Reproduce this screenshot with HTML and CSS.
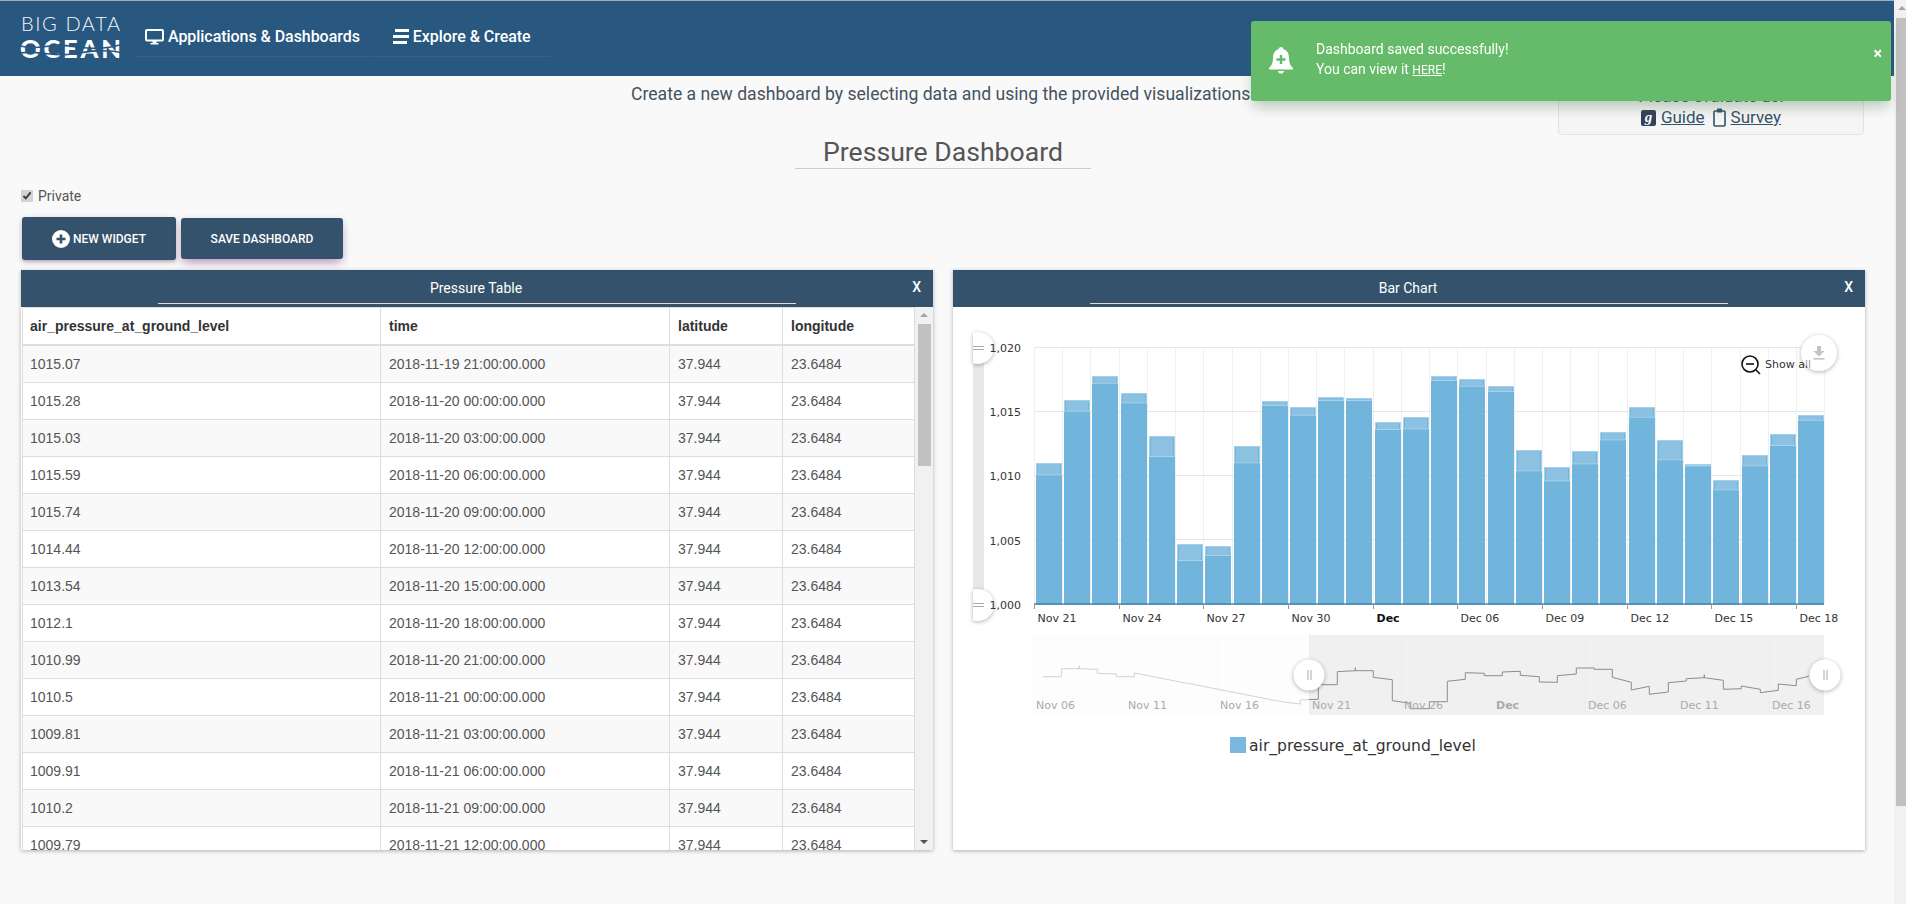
FILE: index.html
```html
<!DOCTYPE html>
<html lang="en">
<head>
    <meta charset="UTF-8">
    <meta name="viewport" content="width=device-width, initial-scale=1.0">
    <title>Pressure Dashboard</title>
    <link rel="stylesheet" href="styles.css">
</head>
<body>

<div class="app">
    <header class="navbar">
        <svg class="logo" width="104" height="54" viewBox="0 0 104 54">
            <text class="logo-top" x="1" y="22">BIG DATA</text>
            <text class="logo-bottom" x="0" y="49">OCEAN</text>
            <path class="logo-wave" d="M0 37c18 5 30 -3 50 0s32 4 54 -2"/>
            <path class="logo-wave" d="M0 44c16 -3 34 4 52 1s34 -5 52 -1"/>
        </svg>
        <nav class="nav-links">
            <a class="nav-link nav-apps" href="#">
                <svg width="19" height="16" viewBox="0 0 19 16">
                    <rect x="1" y="1" width="17" height="10.5" rx="1" fill="none" stroke="#fff" stroke-width="2"/>
                    <path d="M7.5 12h4v2h2v1.5h-8V14h2z" fill="#fff"/>
                </svg>
                Applications &amp; Dashboards
            </a>
            <a class="nav-link nav-explore" href="#">
                <svg width="16" height="15" viewBox="0 0 16 15">
                    <path d="M2 0h14v3H2zM0 6h16v3H0zM0 12h14v3H0z" fill="#fff"/>
                </svg>
                Explore &amp; Create
            </a>
        </nav>
    </header>

    <main class="content">
        <div class="intro">
            <span></span>
            <p class="intro-text">Create a new dashboard by selecting data and using the provided visualizations.</p>
            <div class="evaluate">
                <div>Please evaluate us!</div>
                <div class="evaluate-links">
                    <span class="guide-icon">g</span><a href="#">Guide</a>
                    <svg class="survey-icon" width="13" height="19" viewBox="0 0 13 19">
                        <rect x="1" y="3" width="11" height="15" rx="1" fill="none" stroke="#34526b" stroke-width="1.6"/>
                        <rect x="4" y="0.5" width="5" height="4" fill="#34526b"/>
                    </svg><a href="#">Survey</a>
                </div>
            </div>
        </div>

        <div class="title-row">
            <input class="title-input" type="text" value="Pressure Dashboard">
        </div>

        <label class="private-row"><input type="checkbox" checked> Private</label>

        <div class="actions">
            <button class="btn btn-new">
                <svg width="18" height="18" viewBox="0 0 18 18">
                    <circle cx="9" cy="9" r="9" fill="#fff"/>
                    <path d="M9 4.5v9M4.5 9h9" stroke="#34526b" stroke-width="2.6"/>
                </svg>
                NEW WIDGET
            </button>
            <button class="btn btn-save">SAVE DASHBOARD</button>
        </div>

        <div class="widgets">
            <section class="widget">
                <div class="widget-head">
                    <span class="widget-title">Pressure Table</span>
                    <span class="widget-close">X</span>
                </div>
                <div class="table-wrap">
                    <table id="pressureTable">
                        <colgroup>
                            <col class="col-pressure"><col class="col-time"><col class="col-lat"><col class="col-lon">
                        </colgroup>
                        <thead>
                            <tr>
                                <th>air_pressure_at_ground_level</th>
                                <th>time</th>
                                <th>latitude</th>
                                <th>longitude</th>
                            </tr>
                        </thead>
                        <tbody></tbody>
                    </table>
                    <div class="table-scroll">
                        <span class="arrow-up"></span>
                        <span class="table-thumb"></span>
                        <span class="arrow-down"></span>
                    </div>
                </div>
            </section>

            <section class="widget">
                <div class="widget-head">
                    <span class="widget-title">Bar Chart</span>
                    <span class="widget-close">X</span>
                </div>
                <!-- viewBox uses page coordinates so the numbers below can be read off the screen -->
                <svg id="chart" class="chart" width="912" height="543" viewBox="953 307 912 543">
                    <g id="grid"></g>
                    <g id="bars"></g>
                    <line class="axis" x1="1034" y1="604" x2="1824" y2="604"/>
                    <g id="ticks"></g>

                    <rect class="y-track" x="973" y="347" width="11" height="258"/>
                    <g class="y-handles">
                        <path class="handle" d="M973 332.800A16 16 0 1 1 973 363.200z"/>
                        <path class="handle" d="M973 589.800A16 16 0 1 1 973 620.200z"/>
                        <path class="handle-line" d="M973 346.500h11M973 349.500h11M973 603.500h11M973 606.500h11"/>
                    </g>
                    <g id="yLabels"></g>
                    <g id="xLabels"></g>

                    <circle class="zoom-icon" cx="1750" cy="364" r="8"/>
                    <path class="zoom-minus" d="M1746 364h8"/>
                    <path class="zoom-glass" d="M1756 370l4 4"/>
                    <circle class="export-btn" cx="1819" cy="353" r="18"/>
                    <text class="label" x="1765" y="368">Show all</text>
                    <circle class="export-veil" cx="1819" cy="353" r="18"/>
                    <path class="export-icon" d="M1817 346h4v5h3.500l-5.500 5.500l-5.500 -5.500h3.500z"/>
                    <rect class="export-icon" x="1813.500" y="358" width="11" height="1.600"/>

                    <rect class="nav-bg" x="1034" y="635" width="275" height="80"/>
                    <rect class="nav-selected" x="1309" y="635" width="515" height="80"/>
                    <g id="navGrid"></g>
                    <polyline class="nav-line-off" points="1042.300,676.700 1061.300,676.700 1061.300,668.700 1079.300,668.700 1079.300,665.700 1079.300,668.700 1097.300,669.300 1097.300,673.300 1116.300,674 1116.300,676.700 1134.300,676.700 1134.300,673 1281.700,701.700 1300.300,704 1300.300,700 1309,699.600"/>
                    <polyline class="nav-line-on" points="1309,699.600 1318.300,699.300 1318.300,684.700 1337.300,684.700 1337.300,671.700 1355.300,670.700 1355.300,667.700 1355.300,670.700 1373.300,670.700 1373.300,677.300 1392.300,679.700 1392.300,700.700 1410.300,703.300 1410.300,708.700 1429.300,708.700 1429.300,701.700 1447.300,701.700 1447.300,681.300 1465.300,679.300 1465.300,672.700 1484.300,673.300 1484.300,675.700 1502.300,675.700 1502.300,672 1520.300,671.300 1520.300,675.300 1539.300,676.700 1539.300,682 1557.300,682.300 1557.300,675.700 1576.300,674 1576.300,668 1594.300,668 1594.300,669.300 1612.300,669.300 1612.300,677.300 1631.300,682.300 1631.300,690 1649.300,686.300 1649.300,694.300 1668.300,692 1668.300,682.700 1686.300,681 1686.300,678.700 1704.300,677.700 1704.300,674.700 1704.300,677.700 1723.300,680.300 1723.300,689.300 1741.300,688.700 1741.300,686 1760.300,689.300 1760.300,692.700 1778.300,690.300 1778.300,684 1796.300,685.700 1796.300,679.300 1808.700,676.300"/>
                    <g id="navLabels"></g>
                    <circle class="handle" cx="1309" cy="675" r="15.500"/>
                    <circle class="handle" cx="1825" cy="675" r="15.500"/>
                    <path class="handle-line" d="M1308 670v10M1311 670v10M1824 670v10M1827 670v10"/>

                    <rect class="legend-box" x="1230" y="737" width="16" height="16"/>
                    <text class="legend-text" x="1249" y="751">air_pressure_at_ground_level</text>
                </svg>
            </section>
        </div>
    </main>
</div>

<div class="page-scroll">
    <span class="arrow-up"></span>
    <span class="page-thumb"></span>
</div>

<div class="toast">
    <svg class="toast-bell" width="24" height="27" viewBox="0 0 24 27">
        <path d="M12 0c1.400 0 2.400 1 2.400 2.300C18.500 3.400 20 7 20 11c0 5 1.500 8 4 10v1.500H0V21c2.500-2 4-5 4-10 0-4 1.500-7.600 5.600-8.700C9.600 1 10.600 0 12 0z" fill="#fff"/>
        <path d="M9 24h6c0 1.500-1.300 2.600-3 2.600S9 25.500 9 24z" fill="#fff"/>
        <path d="M12 8v9M7.500 12.500h9" stroke="#66bb6a" stroke-width="2.400"/>
    </svg>
    <div class="toast-text">
        <div>Dashboard saved successfully!</div>
        <div>You can view it <a class="toast-link" href="#">HERE</a>!</div>
    </div>
    <span class="toast-close">×</span>
</div>

<script>
    const rows = [
        ["1015.07", "2018-11-19 21:00:00.000"], ["1015.28", "2018-11-20 00:00:00.000"],
        ["1015.03", "2018-11-20 03:00:00.000"], ["1015.59", "2018-11-20 06:00:00.000"],
        ["1015.74", "2018-11-20 09:00:00.000"], ["1014.44", "2018-11-20 12:00:00.000"],
        ["1013.54", "2018-11-20 15:00:00.000"], ["1012.1", "2018-11-20 18:00:00.000"],
        ["1010.99", "2018-11-20 21:00:00.000"], ["1010.5", "2018-11-21 00:00:00.000"],
        ["1009.81", "2018-11-21 03:00:00.000"], ["1009.91", "2018-11-21 06:00:00.000"],
        ["1010.2", "2018-11-21 09:00:00.000"], ["1009.79", "2018-11-21 12:00:00.000"]
    ];

    const tbody = document.querySelector("#pressureTable tbody");
    rows.forEach(row => {
        const tr = document.createElement("tr");
        tr.innerHTML = `<td>${row[0]}</td><td>${row[1]}</td><td>37.944</td><td>23.6484</td>`;
        tbody.appendChild(tr);
    });

    // [top of bar, bottom of the lighter cap] for each of the 28 bars
    const bars = [
        [463.3, 474.3], [400.3, 410.7], [376.3, 382.7], [393.3, 402.3], [436.3, 456], [544.3, 560], [546.3, 555],
        [446.3, 462.3], [401.3, 405], [407.3, 414.7], [397.3, 400], [398.3, 400], [422.3, 429], [417.3, 428.3],
        [376.3, 380], [379.3, 385.7], [386.3, 391], [450.3, 470.3], [467.3, 480.3], [451.3, 463.3], [432.3, 439.3],
        [407.3, 416.7], [440.3, 459.3], [464.3, 465.3], [480.3, 489.3], [455.3, 465.3], [434.3, 445], [415.3, 419.7]
    ];

    const left = 1034, pitch = 28.22, bottom = 605;
    const xLabels = ["Nov 21", "Nov 24", "Nov 27", "Nov 30", "Dec", "Dec 06", "Dec 09", "Dec 12", "Dec 15", "Dec 18"];
    const navLabels = ["Nov 06", "Nov 11", "Nov 16", "Nov 21", "Nov 26", "Dec", "Dec 06", "Dec 11", "Dec 16"];

    function rect(cls, x, y, w, h) {
        return `<rect class="${cls}" x="${x}" y="${y}" width="${w}" height="${h}"/>`;
    }
    function line(cls, x1, y1, x2, y2) {
        return `<line class="${cls}" x1="${x1}" y1="${y1}" x2="${x2}" y2="${y2}"/>`;
    }

    let gridHtml = "";
    for (let i = 0; i <= 28; i++) {
        const x = Math.round(left + i * pitch) + 0.5;
        gridHtml += line("grid-v", x, 347, x, 604);
    }
    [347.5, 411.5, 475.5, 539.5].forEach(y => {
        gridHtml += line("grid-h", left, y, 1824, y);
    });
    document.getElementById("grid").innerHTML = gridHtml;

    let barHtml = "";
    bars.forEach((bar, i) => {
        const x = Math.round(left + 2 + i * pitch);
        const cap = bar[1] - bar[0];
        barHtml += rect("bar", x, bar[0], 26, bottom - bar[0]);
        barHtml += rect("bar-cap", x + 2, bar[0] + 1.5, 22, Math.max(cap - 1.5, 0));
        barHtml += rect("bar-edge", x + 0.5, bar[0] + 0.5, 25, cap);
    });
    document.getElementById("bars").innerHTML = barHtml;

    let tickHtml = "", labelHtml = "";
    xLabels.forEach((text, i) => {
        const x = Math.round(left + i * 3 * pitch) + 0.5;
        const cls = text === "Dec" ? "label label-bold" : "label";
        tickHtml += line("tick", x, 604, x, 609);
        labelHtml += `<text class="${cls}" x="${x + 3}" y="622">${text}</text>`;
    });
    document.getElementById("ticks").innerHTML = tickHtml;
    document.getElementById("xLabels").innerHTML = labelHtml;

    document.getElementById("yLabels").innerHTML = ["1,020", "1,015", "1,010", "1,005", "1,000"].map((text, i) =>
        `<text class="label label-y" x="1021" y="${352 + i * 64.2}">${text}</text>`).join("");

    let navHtml = "", navGridHtml = "";
    navLabels.forEach((text, i) => {
        const x = 1036 + i * 92;
        const cls = text === "Dec" ? "nav-label nav-label-bold" : "nav-label";
        navHtml += `<text class="${cls}" x="${x}" y="709">${text}</text>`;
        navGridHtml += line("nav-grid", x - 2.5, 635, x - 2.5, 715);
    });
    document.getElementById("navLabels").innerHTML = navHtml;
    document.getElementById("navGrid").innerHTML = navGridHtml;
</script>

</body>
</html>
```

FILE: styles.css
```css
html, body {
    margin: 0;
    height: 904px;
    overflow: hidden;
}
body {
    display: flex;
    background-color: #f9f9f9;
    font-family: Roboto, "Liberation Sans", sans-serif;
    color: #555;
}
a {
    color: inherit;
}
.app {
    flex: 1;
    min-width: 0;
}

/* top bar */
.navbar {
    display: flex;
    align-items: flex-start;
    height: 75px;
    background-color: #285780;
    border-top: 1px solid #aaa;
}
.logo {
    margin: 8px 12px 0 20px;
}
.logo-top {
    font-family: Lato, sans-serif;
    font-weight: 300;
    font-size: 20px;
    letter-spacing: 1.6px;
    fill: #f2f5f8;
}
.logo-bottom {
    font-family: Lato, sans-serif;
    font-weight: 900;
    font-size: 25.5px;
    letter-spacing: 2.8px;
    fill: #fff;
}
.logo-wave {
    fill: none;
    stroke: #285780;
    stroke-width: 1.6;
}
.nav-links {
    display: flex;
    gap: 2px;
    margin-top: 18px;
}
.nav-link {
    display: flex;
    align-items: center;
    gap: 4px;
    height: 35px;
    padding-bottom: 2px;
    color: #fff;
    font-size: 16px;
    font-weight: 500;
    letter-spacing: -0.05px;
    text-decoration: none;
    border-bottom: 1px solid #35638c;
}
.nav-apps {
    padding-left: 9px;
    padding-right: 10px;
}
.nav-explore {
    padding-left: 21px;
    padding-right: 20px;
}

/* page content */
.content {
    padding: 0 29px 0 21px;
}
.intro {
    display: grid;
    grid-template-columns: 1fr auto 1fr;
    padding-top: 4px;
}
.intro-text {
    margin: 2px 0 0;
    font-size: 17.6px;
    line-height: 25px;
    color: #44525f;
}
.evaluate {
    justify-self: end;
    box-sizing: border-box;
    width: 306px;
    height: 55px;
    margin-right: 1px;
    padding-top: 5px;
    font-size: 17px;
    line-height: 21px;
    text-align: center;
    color: #44525f;
    background-color: #f5f5f5;
    border: 1px solid #e3e3e3;
    border-radius: 4px;
}
.evaluate-links {
    display: flex;
    justify-content: center;
    align-items: center;
    color: #34526b;
}
.guide-icon {
    width: 15px;
    height: 16px;
    margin-right: 5px;
    line-height: 14px;
    font-family: "Liberation Serif", serif;
    font-style: italic;
    font-weight: bold;
    font-size: 15px;
    color: #fff;
    background-color: #34405a;
    border-radius: 2px;
}
.survey-icon {
    margin: 0 5px 0 8px;
}
.title-row {
    display: flex;
    justify-content: center;
}
.title-input {
    box-sizing: border-box;
    width: 296px;
    height: 34px;
    padding: 0;
    font-family: inherit;
    font-size: 26.6px;
    color: #555;
    text-align: center;
    background: transparent;
    border: none;
    border-bottom: 1px solid #ccc;
    outline: none;
}
.private-row {
    display: flex;
    align-items: center;
    gap: 5px;
    height: 20px;
    margin-top: 17px;
    font-size: 14px;
}
.private-row input {
    width: 12px;
    height: 12px;
    margin: 0;
    accent-color: #d4d4d4;
}
.actions {
    display: flex;
    align-items: center;
    gap: 5px;
    margin: 11px 0 10px 1px;
}
.btn {
    display: flex;
    align-items: center;
    justify-content: center;
    gap: 3px;
    padding: 0;
    font-family: inherit;
    font-size: 12px;
    font-weight: 500;
    color: #fff;
    background-color: #34526b;
    border: none;
    border-radius: 3px;
}
.btn-new {
    width: 154px;
    height: 43px;
    box-shadow: 0 2px 2px rgba(156, 39, 176, 0.2), 0 2px 6px rgba(0, 0, 0, 0.2);
}
.btn-save {
    width: 162px;
    height: 41px;
    box-shadow: 0 6px 10px -4px rgba(156, 39, 176, 0.4), 0 3px 8px rgba(0, 0, 0, 0.18);
}

/* widgets */
.widgets {
    display: flex;
    gap: 20px;
}
.widget {
    flex: 1;
    min-width: 0;
    height: 580px;
    overflow: hidden;
    background-color: #fff;
    box-shadow: 0 1px 4px rgba(0, 0, 0, 0.3);
}
.widget-head {
    position: relative;
    display: flex;
    justify-content: center;
    height: 37px;
    background-color: #34526b;
    color: #fff;
}
.widget-title {
    box-sizing: border-box;
    width: 638px;
    height: 34px;
    margin-right: 1px;
    padding-right: 1px;
    line-height: 36px;
    font-size: 14px;
    text-align: center;
    border-bottom: 1px solid #ddd;
}
.widget-close {
    position: absolute;
    top: 9px;
    right: 12px;
    font-size: 14px;
    font-weight: 500;
}

/* table */
.table-wrap {
    display: flex;
    height: 543px;
    overflow: hidden;
}
table {
    width: 892px;
    flex: none;
    margin-left: 1px;
    table-layout: fixed;
    border-collapse: collapse;
    align-self: flex-start;
    font-family: "Liberation Sans", Arial, sans-serif;
    font-size: 14px;
    line-height: 20px;
}
.col-pressure { width: 358px; }
.col-time { width: 289px; }
.col-lat { width: 113px; }
.col-lon { width: 132px; }
th, td {
    padding: 8px;
    text-align: left;
    border: 1px solid #ddd;
}
th:first-child, td:first-child {
    padding-left: 7px;
}
th {
    height: 20px;
    color: #333;
    border-bottom: 2px solid #ddd;
}
tbody tr:nth-child(odd) {
    background-color: #f9f9f9;
}
.table-scroll {
    position: relative;
    flex: 1;
    background-color: #f1f1f1;
}
.table-thumb {
    position: absolute;
    top: 17px;
    left: 3px;
    width: 13px;
    height: 142px;
    background-color: #c1c1c1;
}
.arrow-up, .arrow-down {
    position: absolute;
    left: 50%;
    margin-left: -4px;
    border-left: 4px solid transparent;
    border-right: 4px solid transparent;
}
.arrow-up {
    top: 6px;
    border-bottom: 4px solid #a3a3a3;
}
.arrow-down {
    bottom: 6px;
    border-top: 4px solid #505050;
}

/* page scrollbar */
.page-scroll {
    position: relative;
    flex: none;
    width: 12px;
    background-color: #f1f1f1;
}
.page-scroll .arrow-up {
    top: 6px;
    left: 8px;
}
.page-thumb {
    position: absolute;
    top: 18px;
    left: 2px;
    right: 0;
    height: 788px;
    background-color: #c1c1c1;
}

/* notification */
.toast {
    position: fixed;
    top: 21px;
    right: 15px;
    display: flex;
    align-items: center;
    box-sizing: border-box;
    width: 640px;
    height: 80px;
    padding-left: 18px;
    color: #fff;
    font-size: 14px;
    line-height: 20px;
    background-color: #66bb6a;
    border-radius: 3px;
    box-shadow: 0 8px 14px -2px rgba(70, 110, 70, 0.35);
}
.toast-bell {
    flex: none;
    margin: 0 23px 2px 0;
}
.toast-text {
    margin-bottom: 3px;
}
.toast-link {
    font-size: 12px;
}
.toast-close {
    position: absolute;
    top: 21px;
    right: 9px;
    font-size: 16px;
    line-height: 24px;
    font-weight: bold;
}

/* chart */
.chart {
    display: block;
    font-family: "DejaVu Sans", sans-serif;
}
.grid-v { stroke: #f0f0f0; }
.grid-h { stroke: #e6e6e6; }
.bar { fill: #72b5dc; }
.bar-cap { fill: #8cc1e2; }
.bar-edge {
    fill: none;
    stroke: #a9d2ea;
}
.axis { stroke: #4f86a8; stroke-width: 1.5; }
.tick { stroke: #999; }
.y-track { fill: #e8e8e8; }
.handle {
    fill: #fff;
    filter: drop-shadow(0 1px 2px rgba(0, 0, 0, 0.3));
}
.handle-line {
    fill: none;
    stroke: #aaa;
}
.label {
    font-size: 11px;
    fill: #333;
}
.label-y { text-anchor: end; }
.label-bold { font-weight: bold; fill: #111; }
.zoom-icon, .zoom-minus, .zoom-glass {
    fill: none;
    stroke: #111;
    stroke-width: 1.6;
}
.export-btn {
    fill: #fff;
    filter: drop-shadow(0 1px 2px rgba(0, 0, 0, 0.3));
}
.export-veil {
    fill: rgba(255, 255, 255, 0.5);
}
.export-icon { fill: #c4c4c4; }
.nav-bg { fill: #fdfdfd; }
.nav-selected { fill: #f0f0f0; }
.nav-grid { stroke: rgba(0, 0, 0, 0.015); }
.nav-line-off, .nav-line-on {
    fill: none;
}
.nav-line-off { stroke: #d2d2d2; }
.nav-line-on { stroke: #8c8c8c; }
.nav-label {
    font-size: 11px;
    fill: #aaa;
}
.nav-label-bold { font-weight: bold; }
.legend-box { fill: #7ab9df; }
.legend-text {
    font-size: 15.6px;
    fill: #333;
}
```
